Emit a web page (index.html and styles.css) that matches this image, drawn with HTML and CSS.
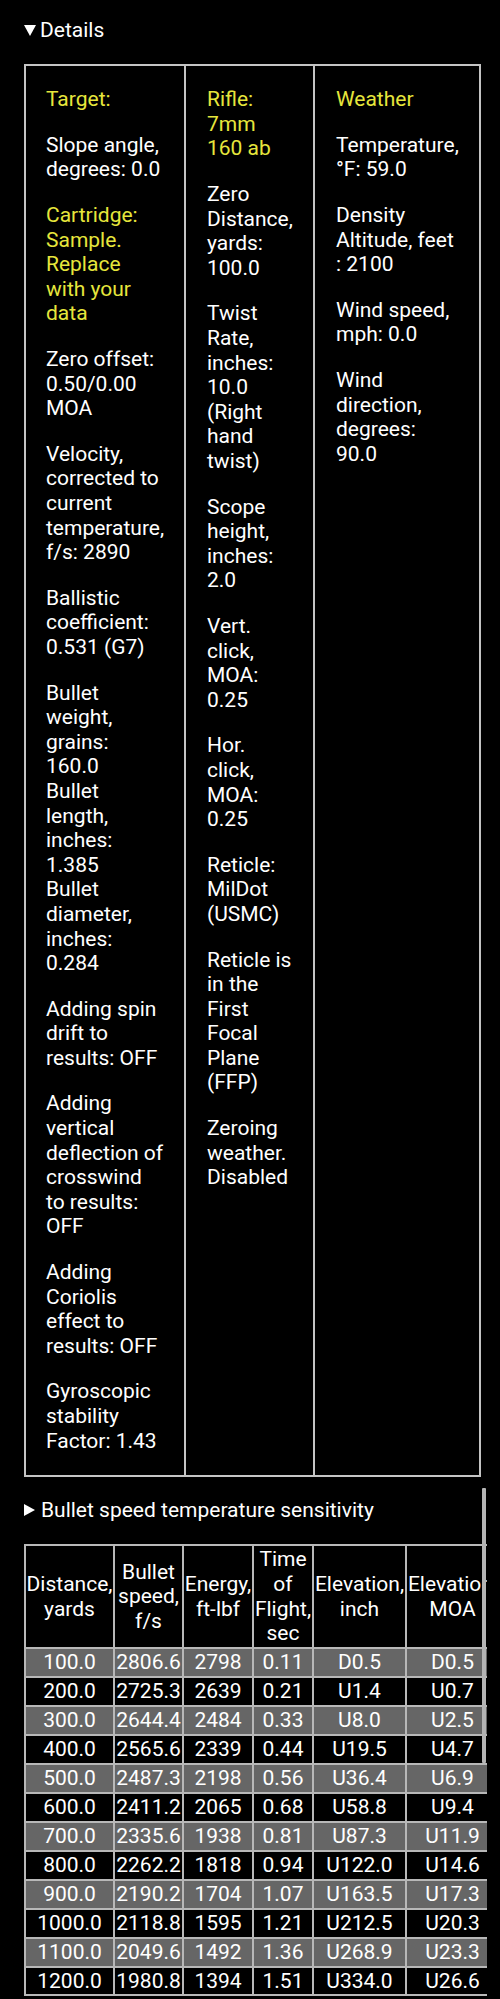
FILE: index.html
```html
<!DOCTYPE html>
<html lang="en">
<head>
<meta charset="utf-8">
<title>Details</title>
<link rel="stylesheet" href="styles.css">
</head>
<body>
<div class="page">
  <details class="details" open>
    <summary class="summary"><span class="tri tri-down"></span><span>Details</span></summary>
    <div class="specs">
      <div class="col col-target">
        <p class="hl">Target:</p>
        <p>Slope angle, degrees: 0.0</p>
        <p class="hl">Cartridge: Sample. Replace with your data</p>
        <p>Zero offset: 0.50/0.00 MOA</p>
        <p>Velocity, corrected to current temperature, f/s: 2890</p>
        <p>Ballistic coefficient: 0.531 (G7)</p>
        <p>Bullet weight, grains: 160.0<br>Bullet length, inches: 1.385<br>Bullet diameter, inches: 0.284</p>
        <p>Adding spin drift to results: OFF</p>
        <p>Adding vertical deflection of crosswind to results: OFF</p>
        <p>Adding Coriolis effect to results: OFF</p>
        <p>Gyroscopic stability Factor: 1.43</p>
      </div>
      <div class="col col-rifle">
        <p class="hl">Rifle: 7mm 160 ab</p>
        <p>Zero Distance, yards: 100.0</p>
        <p>Twist Rate, inches: 10.0 (Right hand twist)</p>
        <p>Scope height, inches: 2.0</p>
        <p>Vert. click, MOA: 0.25</p>
        <p>Hor. click, MOA: 0.25</p>
        <p>Reticle: MilDot (USMC)</p>
        <p>Reticle is in the First Focal Plane (FFP)</p>
        <p>Zeroing weather. Disabled</p>
      </div>
      <div class="col col-weather">
        <p class="hl">Weather</p>
        <p>Temperature, °F: 59.0</p>
        <p>Density Altitude, feet : 2100</p>
        <p>Wind speed, mph: 0.0</p>
        <p>Wind direction, degrees: 90.0</p>
      </div>
    </div>
  </details>

  <div class="results">
    <details class="details">
      <summary class="summary"><span class="tri tri-right"></span><span>Bullet speed temperature sensitivity</span></summary>
    </details>
    <div class="table-wrap">
      <table class="traj">
        <thead>
          <tr>
            <th class="c1">Distance, yards</th>
            <th class="c2">Bullet speed, f/s</th>
            <th class="c3">Energy, ft-lbf</th>
            <th class="c4">Time of Flight, sec</th>
            <th class="c5">Elevation, inch</th>
            <th class="c6">Elevation, MOA</th>
          </tr>
        </thead>
        <tbody>
          <tr class="alt"><td>100.0</td><td>2806.6</td><td>2798</td><td>0.11</td><td>D0.5</td><td>D0.5</td></tr>
          <tr><td>200.0</td><td>2725.3</td><td>2639</td><td>0.21</td><td>U1.4</td><td>U0.7</td></tr>
          <tr class="alt"><td>300.0</td><td>2644.4</td><td>2484</td><td>0.33</td><td>U8.0</td><td>U2.5</td></tr>
          <tr><td>400.0</td><td>2565.6</td><td>2339</td><td>0.44</td><td>U19.5</td><td>U4.7</td></tr>
          <tr class="alt"><td>500.0</td><td>2487.3</td><td>2198</td><td>0.56</td><td>U36.4</td><td>U6.9</td></tr>
          <tr><td>600.0</td><td>2411.2</td><td>2065</td><td>0.68</td><td>U58.8</td><td>U9.4</td></tr>
          <tr class="alt"><td>700.0</td><td>2335.6</td><td>1938</td><td>0.81</td><td>U87.3</td><td>U11.9</td></tr>
          <tr><td>800.0</td><td>2262.2</td><td>1818</td><td>0.94</td><td>U122.0</td><td>U14.6</td></tr>
          <tr class="alt"><td>900.0</td><td>2190.2</td><td>1704</td><td>1.07</td><td>U163.5</td><td>U17.3</td></tr>
          <tr><td>1000.0</td><td>2118.8</td><td>1595</td><td>1.21</td><td>U212.5</td><td>U20.3</td></tr>
          <tr class="alt"><td>1100.0</td><td>2049.6</td><td>1492</td><td>1.36</td><td>U268.9</td><td>U23.3</td></tr>
          <tr><td>1200.0</td><td>1980.8</td><td>1394</td><td>1.51</td><td>U334.0</td><td>U26.6</td></tr>
        </tbody>
      </table>
    </div>
    <div class="scrollbar"></div>
  </div>
</div>
</body>
</html>
```

FILE: styles.css
```css
html, body {
  margin: 0;
  padding: 0;
  background: #000;
}

body {
  color: #fff;
  font-family: Roboto, "Noto Sans", "Liberation Sans", sans-serif;
  font-size: 21px;
  line-height: 24.6px;
}

.page {
  padding: 18px 0 10px 24px;
}

.details {
  margin: 0;
}

.summary {
  display: flex;
  align-items: center;
  gap: 4px;
  list-style: none;
  cursor: pointer;
  height: 24.6px;
}

.summary::-webkit-details-marker {
  display: none;
}

.tri {
  display: block;
  width: 0;
  height: 0;
}

.tri-down {
  border-left: 6px solid transparent;
  border-right: 6px solid transparent;
  border-top: 11px solid #fff;
}

.tri-right {
  border-top: 6.5px solid transparent;
  border-bottom: 6.5px solid transparent;
  border-left: 11px solid #fff;
  margin-right: 2px;
}

/* ---------- specs block ---------- */
.specs {
  display: flex;
  box-sizing: border-box;
  width: 457px;
  margin-top: 21px;
  border: 2px solid #c4c4c4;
}

.col {
  box-sizing: border-box;
  padding: 0.7px 20px;
}

.col + .col {
  border-left: 2px solid #c4c4c4;
}

.col-target {
  width: 158px;
  padding-left: 20px;
  padding-right: 20px;
}

.col-rifle {
  width: 129px;
  padding-left: 21px;
  padding-right: 18px;
}

.col-weather {
  width: 166px;
  padding-left: 21px;
  padding-right: 18px;
}

.col p {
  margin: 21px 0;
}

.hl {
  color: #e6e63c;
}

/* ---------- results ---------- */
.results {
  position: relative;
  padding-top: 21px;
}

.table-wrap {
  width: 463px;
  margin-top: 22px;
  overflow: hidden;
}

.traj {
  table-layout: fixed;
  border-collapse: separate;
  border-spacing: 0;
  width: 476px;
  border-right: 2px solid #b8b8b8;
  border-bottom: 2px solid #b8b8b8;
}

.traj th,
.traj td {
  box-sizing: border-box;
  border-left: 2px solid #b8b8b8;
  border-top: 2px solid #b8b8b8;
  text-align: center;
  vertical-align: middle;
  font-weight: normal;
  white-space: normal;
  overflow: visible;
}

.traj th {
  padding: 1px 0;
}

.traj td {
  padding: 1.2px 0;
  white-space: nowrap;
}

.traj .c1 { width: 89px; }
.traj .c2 { width: 69px; }
.traj .c3 { width: 70px; }
.traj .c4 { width: 60px; }
.traj .c5 { width: 93px; }
.traj .c6 { width: 93px; }

.traj tr.alt td {
  background: #666;
}

.scrollbar {
  position: absolute;
  left: 458px;
  top: 11px;
  width: 4px;
  height: 275px;
  background: #b4b4b4;
  border-radius: 1px;
}
```
